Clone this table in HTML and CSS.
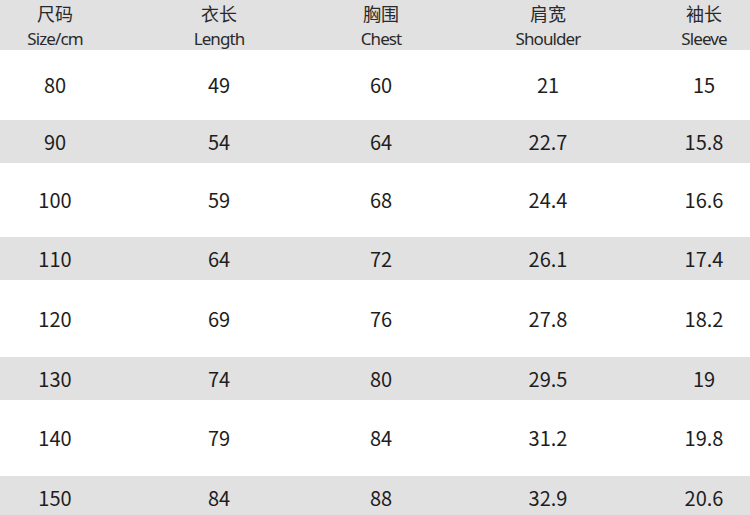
FILE: index.html
```html
<!DOCTYPE html>
<html lang="zh">
<head>
<meta charset="utf-8">
<link rel="stylesheet" href="styles.css">
</head>
<body>
<div class="table">
  <div class="row head">
    <div class="cell"><span class="zh">尺码</span><span class="en">Size/cm</span></div>
    <div class="cell"><span class="zh">衣长</span><span class="en">Length</span></div>
    <div class="cell"><span class="zh">胸围</span><span class="en">Chest</span></div>
    <div class="cell"><span class="zh">肩宽</span><span class="en">Shoulder</span></div>
    <div class="cell"><span class="zh">袖长</span><span class="en">Sleeve</span></div>
  </div>
  <div class="row white r1"><div class="cell">80</div><div class="cell">49</div><div class="cell">60</div><div class="cell">21</div><div class="cell">15</div></div>
  <div class="row gray"><div class="cell">90</div><div class="cell">54</div><div class="cell">64</div><div class="cell">22.7</div><div class="cell">15.8</div></div>
  <div class="row white r3"><div class="cell">100</div><div class="cell">59</div><div class="cell">68</div><div class="cell">24.4</div><div class="cell">16.6</div></div>
  <div class="row gray"><div class="cell">110</div><div class="cell">64</div><div class="cell">72</div><div class="cell">26.1</div><div class="cell">17.4</div></div>
  <div class="row white r5"><div class="cell">120</div><div class="cell">69</div><div class="cell">76</div><div class="cell">27.8</div><div class="cell">18.2</div></div>
  <div class="row gray"><div class="cell">130</div><div class="cell">74</div><div class="cell">80</div><div class="cell">29.5</div><div class="cell">19</div></div>
  <div class="row white r7"><div class="cell">140</div><div class="cell">79</div><div class="cell">84</div><div class="cell">31.2</div><div class="cell">19.8</div></div>
  <div class="row gray last"><div class="cell">150</div><div class="cell">84</div><div class="cell">88</div><div class="cell">32.9</div><div class="cell">20.6</div></div>
</div>
</body>
</html>
```
FILE: styles.css
```css
html, body {
  margin: 0;
  padding: 0;
  background: #ffffff;
  overflow: hidden;
}
.table {
  width: 750px;
  font-family: "Noto Sans CJK SC", "Noto Sans", sans-serif;
  color: #1e1e1e;
}
.row {
  display: grid;
  grid-template-columns: 110px 218px 106px 228px 84px 4px;
  align-items: center;
}
.cell {
  text-align: center;
  font-size: 20px;
  line-height: 1;
}
.head {
  height: 50px;
  background: #e1e1e1;
  align-items: start;
}
.head .cell {
  display: flex;
  flex-direction: column;
  align-items: center;
  color: #2a2a2a;
}
.zh {
  font-size: 18px;
  line-height: 26px;
}
.en {
  font-family: "Noto Sans", sans-serif;
  font-size: 17px;
  line-height: 23px;
  margin-top: 1px;
  letter-spacing: -0.9px;
}
.gray {
  height: 43px;
  background: #e1e1e1;
}
.r1 { height: 70px; }
.r3 { height: 74px; }
.r5 { height: 77px; }
.r7 { height: 76px; }
.last { height: 43px; }
```
